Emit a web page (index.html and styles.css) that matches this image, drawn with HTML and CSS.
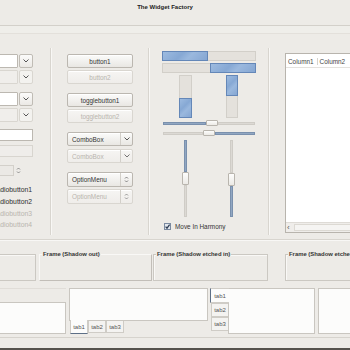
FILE: index.html
```html
<!DOCTYPE html>
<html lang="en">
<head>
    <meta charset="UTF-8">
    <meta name="viewport" content="width=device-width, initial-scale=1.0">
    <title>The Widget Factory</title>
    <link rel="stylesheet" href="styles.css">
</head>
<body>
<div class="window">
    <div class="titlebar">The Widget Factory</div>
    <div class="menubar"></div>

    <div class="main">
        <!-- entries, combos, radios -->
        <div class="col col-a">
            <div class="combo">
                <div class="entry"></div>
                <div class="drop"><svg width="6" height="4" viewBox="0 0 6 4"><path d="M0.5 0.5 L3 3 L5.5 0.5" fill="none" stroke="#555" stroke-width="1"/></svg></div>
            </div>
            <div class="combo off">
                <div class="entry"></div>
                <div class="drop"><svg width="6" height="4" viewBox="0 0 6 4"><path d="M0.5 0.5 L3 3 L5.5 0.5" fill="none" stroke="#555" stroke-width="1"/></svg></div>
            </div>
            <div class="combo pair">
                <div class="entry"></div>
                <div class="drop"><svg width="6" height="4" viewBox="0 0 6 4"><path d="M0.5 0.5 L3 3 L5.5 0.5" fill="none" stroke="#555" stroke-width="1"/></svg></div>
            </div>
            <div class="combo off">
                <div class="entry"></div>
                <div class="drop"><svg width="6" height="4" viewBox="0 0 6 4"><path d="M0.5 0.5 L3 3 L5.5 0.5" fill="none" stroke="#555" stroke-width="1"/></svg></div>
            </div>
            <div class="text-entry"></div>
            <div class="text-entry off"></div>
            <div class="spin">
                <div class="spin-field"></div>
                <div class="spin-arrows"><svg width="5" height="7" viewBox="0 0 5 7"><path d="M1 2.5 L2.5 1 L4 2.5 M1 4.5 L2.5 6 L4 4.5" fill="none" stroke="#777" stroke-width="0.8"/></svg></div>
            </div>
            <div class="radios">
                <div class="radio"><span class="dot on"></span>radiobutton1</div>
                <div class="radio"><span class="dot"></span>radiobutton2</div>
                <div class="radio off"><span class="dot"></span>radiobutton3</div>
                <div class="radio off"><span class="dot"></span>radiobutton4</div>
            </div>
        </div>

        <!-- buttons -->
        <div class="col col-b">
            <div class="btn">button1</div>
            <div class="btn off">button2</div>
            <div class="btn pair">togglebutton1</div>
            <div class="btn off">togglebutton2</div>
            <div class="btn combo-btn pair">
                <span class="lbl">ComboBox</span>
                <span class="side"><svg width="6" height="4" viewBox="0 0 6 4"><path d="M0.5 0.5 L3 3 L5.5 0.5" fill="none" stroke="#555" stroke-width="1"/></svg></span>
            </div>
            <div class="btn combo-btn off">
                <span class="lbl">ComboBox</span>
                <span class="side"><svg width="6" height="4" viewBox="0 0 6 4"><path d="M0.5 0.5 L3 3 L5.5 0.5" fill="none" stroke="#555" stroke-width="1"/></svg></span>
            </div>
            <div class="btn combo-btn option pair">
                <span class="lbl">OptionMenu</span>
                <span class="side"><svg width="5" height="7" viewBox="0 0 5 7"><path d="M1 2.5 L2.5 1 L4 2.5 M1 4.5 L2.5 6 L4 4.5" fill="none" stroke="#666" stroke-width="0.8"/></svg></span>
            </div>
            <div class="btn combo-btn option off">
                <span class="lbl">OptionMenu</span>
                <span class="side"><svg width="5" height="7" viewBox="0 0 5 7"><path d="M1 2.5 L2.5 1 L4 2.5 M1 4.5 L2.5 6 L4 4.5" fill="none" stroke="#666" stroke-width="0.8"/></svg></span>
            </div>
        </div>

        <!-- progress bars and scales -->
        <div class="col col-c">
            <div class="pbar"><div class="fill" style="width: 50%"></div></div>
            <div class="pbar rtl"><div class="fill" style="width: 50%"></div></div>
            <div class="vbars">
                <div class="vbar one"><div class="fill" style="height: 50%"></div></div>
                <div class="vbar two"><div class="fill" style="height: 52%"></div></div>
            </div>
            <div class="hscale">
                <span class="trough blue" style="width: 43px"></span>
                <span class="knob"></span>
                <span class="trough"></span>
            </div>
            <div class="hscale second">
                <span class="trough" style="width: 40px"></span>
                <span class="knob"></span>
                <span class="trough blue"></span>
            </div>
            <div class="vscales">
                <div class="vscale one">
                    <span class="trough blue" style="height: 32px"></span>
                    <span class="knob"></span>
                    <span class="trough"></span>
                </div>
                <div class="vscale two">
                    <span class="trough" style="height: 33px"></span>
                    <span class="knob"></span>
                    <span class="trough blue"></span>
                </div>
            </div>
            <div class="check">
                <svg width="7" height="7" viewBox="0 0 7 7"><rect x="0.5" y="0.5" width="6" height="6" fill="#e3e8ee" stroke="#7b8aa0"/><path d="M1.6 3.6 L3 5.2 L5.6 1.6" fill="none" stroke="#2b3a52" stroke-width="1.2"/></svg>
                <span>Move In Harmony</span>
            </div>
        </div>

        <!-- tree view -->
        <div class="col col-d">
            <div class="tree">
                <div class="tree-head">
                    <span class="colhead first">Column1</span>
                    <span class="colhead">Column2</span>
                </div>
                <div class="tree-body"></div>
                <div class="hscroll">
                    <span class="arrow">&#8249;</span>
                    <span class="track"></span>
                </div>
            </div>
        </div>
    </div>

    <div class="hsep"></div>

    <div class="frames">
        <div class="frame f1"><span class="frame-label">Frame (Shadow in)</span></div>
        <div class="frame f2 out"><span class="frame-label">Frame (Shadow out)</span></div>
        <div class="frame f3 etched"><span class="frame-label">Frame (Shadow etched in)</span></div>
        <div class="frame f4 etched"><span class="frame-label">Frame (Shadow etched out)</span></div>
    </div>

    <div class="notebooks">
        <div class="nb nb-top">
            <div class="page"></div>
        </div>
        <div class="nb nb-bottom">
            <div class="page"></div>
            <div class="tabs">
                <span class="tab active">tab1</span>
                <span class="tab">tab2</span>
                <span class="tab">tab3</span>
            </div>
        </div>
        <div class="nb nb-left">
            <div class="tabs">
                <span class="tab active">tab1</span>
                <span class="tab">tab2</span>
                <span class="tab">tab3</span>
            </div>
            <div class="page"></div>
        </div>
        <div class="nb nb-right">
            <div class="page"></div>
        </div>
    </div>

    <div class="foot"></div>
</div>
</body>
</html>
```

FILE: styles.css
```css
/* base */
* { box-sizing: border-box; }

body {
    margin: 0;
    width: 350px;
    height: 350px;
    overflow: hidden;
    background: #edebe7;
    font-family: "Liberation Sans", Arial, sans-serif;
    font-size: 6.4px;
    color: #3b3b3b;
}

.window {
    height: 350px;
    display: flex;
    flex-direction: column;
}

/* title + menubar */
.titlebar {
    height: 26px;
    padding: 4px 20px 0 0;
    border-bottom: 1px solid #d3d0ca;
    text-align: center;
    font-weight: bold;
    font-size: 6px;
    line-height: 7px;
    color: #222;
}

.menubar {
    height: 8px;
    border-bottom: 1px solid #e3e0db;
    background: #efeeea;
}

/* main columns */
.main {
    display: flex;
    height: 187px;
    margin-top: 14px;
}

.col {
    display: flex;
    flex-direction: column;
    flex-shrink: 0;
}

.col-b, .col-c, .col-d {
    border-left: 1px solid #d8d5cf;
    box-shadow: inset 1px 0 #f8f7f5;
}

.col-a {
    width: 80px;
    margin-left: -30px;
    padding: 6px 17px 0 0;
}

.col-b {
    width: 98px;
    padding: 6px 0 0 16px;
}

.col-c {
    width: 120px;
    padding: 3px 0 0 13px;
}

.col-d {
    flex: 1;
    padding: 5px 0 0 16px;
}

/* combos (left column) */
.combo {
    display: flex;
    gap: 1px;
    height: 14px;
    margin-top: 2px;
}

.combo:first-child { margin-top: 0; }
.combo.pair { margin-top: 8px; }

.combo .entry {
    flex: 1;
    background: #fff;
    border: 1px solid #bcb8b1;
    border-radius: 1px;
}

.drop {
    width: 14px;
    display: flex;
    align-items: center;
    justify-content: center;
    border: 1px solid #c0bcb5;
    border-radius: 2px;
    background: linear-gradient(#fbfbfa, #ebe9e5);
}

.combo.off .entry {
    background: #f0eeeb;
    border-color: #d9d6d0;
}

.combo.off .drop {
    border-color: #d9d6d0;
    background: #f3f2ef;
}

.text-entry {
    height: 12px;
    margin-top: 7px;
    background: #fff;
    border: 1px solid #bcb8b1;
}

.text-entry.off {
    margin-top: 4px;
    background: #efedea;
    border-color: #d8d5cf;
}

.spin {
    display: flex;
    height: 11px;
    margin: 8px 12px 0 0;
}

.spin-field {
    flex: 1;
    background: #ebe9e5;
    border: 1px solid #d3d0ca;
}

.spin-arrows {
    width: 6px;
    display: flex;
    align-items: center;
    justify-content: center;
    margin-left: 1px;
}

.radios {
    margin-top: 8px;
    display: flex;
    flex-direction: column;
}

.radio {
    height: 11.7px;
    display: flex;
    align-items: center;
    justify-content: flex-end;
    gap: 3px;
    padding-right: 1px;
    font-size: 6.8px;
    color: #2e2e2e;
}

.radio.off { color: #b9b5ae; }

.dot {
    width: 7px;
    height: 7px;
    border-radius: 50%;
    border: 1px solid #9f9a92;
    background: #fff;
}

/* buttons */
.btn {
    width: 66px;
    height: 14px;
    margin-top: 2px;
    display: flex;
    align-items: center;
    justify-content: center;
    border: 1px solid #bbb7b0;
    border-radius: 2px;
    background: linear-gradient(#fbfbfa, #e9e7e3);
    box-shadow: inset 0 1px #fff;
    color: #333;
}

.btn:first-child { margin-top: 0; }
.btn.pair { margin-top: 9px; }

.btn.off {
    border-color: #d9d6d0;
    background: linear-gradient(#f6f5f3, #efedea);
    color: #b8b4ad;
}

.combo-btn {
    justify-content: flex-start;
    padding-left: 4px;
}

.combo-btn .lbl { flex: 1; }

.combo-btn .side {
    width: 12px;
    height: 100%;
    display: flex;
    align-items: center;
    justify-content: center;
    border-left: 1px solid #d2cfc9;
}

.combo-btn.off { margin-top: 3px; }
.option { height: 15px; }
.option.off { margin-top: 2px; }
.combo-btn.off svg { opacity: 0.8; }

/* progress bars */
.pbar {
    width: 94px;
    height: 10px;
    margin-bottom: 2px;
    display: flex;
    background: #e4e1dc;
    border: 1px solid #d2cfc9;
}

.pbar.rtl { justify-content: flex-end; }

.fill {
    background: linear-gradient(135deg, #9dbbe0 0%, #86a8d4 40%, #9ab8de 60%, #85a6d2 100%);
    border: 1px solid #6487b8;
}

.pbar .fill { margin: -1px; height: 10px; }

.vbars {
    display: flex;
    height: 43px;
    padding-left: 17px;
    gap: 34px;
}

.vbar {
    width: 13px;
    display: flex;
    flex-direction: column;
    background: #e4e1dc;
    border: 1px solid #d2cfc9;
}

.vbar.one { justify-content: flex-end; }
.vbar.two { width: 12px; }
.vbar .fill { margin: -1px; }

/* scales */
.hscale {
    width: 92px;
    height: 6px;
    margin: 2px 0 0 1px;
    display: flex;
    align-items: center;
}

.hscale.second { margin-top: 4px; }

.trough {
    display: block;
    background: #dcd9d4;
    border: 1px solid #cfccc6;
}

.hscale .trough { height: 3px; }
.hscale .trough:last-child { flex: 1; }

.trough.blue {
    background: #91a7c2;
    border-color: #7a90ad;
}

.knob {
    display: block;
    flex-shrink: 0;
    background: linear-gradient(#fdfdfc, #eceae6);
    border: 1px solid #b9b5ae;
    border-radius: 1px;
}

.hscale .knob { width: 12px; height: 6px; }

.vscales {
    display: flex;
    height: 77px;
    margin-top: 4px;
    padding-left: 20px;
    gap: 39px;
}

.vscale {
    width: 7px;
    display: flex;
    flex-direction: column;
    align-items: center;
}

.vscale .trough { width: 3px; }
.vscale .trough:last-child { flex: 1; }
.vscale .knob { width: 7px; height: 13px; }

.check {
    display: flex;
    align-items: center;
    gap: 4px;
    height: 8px;
    margin: 5px 0 0 2px;
    font-size: 6.4px;
    color: #333;
}

/* tree */
.tree {
    width: 80px;
    height: 180px;
    display: flex;
    flex-direction: column;
    background: #fff;
    border: 1px solid #b8b4ad;
}

.tree-head {
    height: 14px;
    display: flex;
    align-items: center;
    padding-top: 2px;
    border-bottom: 1px solid #e4e2de;
    color: #444;
}

.colhead {
    padding: 0 3px 0 2px;
}

.colhead.first { border-right: 1px solid #d6d3ce; }

.tree-body { flex: 1; }

.hscroll {
    height: 10px;
    display: flex;
    align-items: center;
    gap: 2px;
    padding: 0 0 0 1px;
    background: #efedea;
    border-top: 1px solid #dedbd6;
}

.hscroll .arrow {
    width: 5px;
    font-size: 8px;
    line-height: 8px;
    color: #555;
}

.hscroll .track {
    flex: 1;
    height: 7px;
    background: #f5f4f2;
    border: 1px solid #dcd9d3;
}

/* separator */
.hsep {
    height: 2px;
    margin-top: 4px;
    border-top: 1px solid #d8d5cf;
    background: #f8f7f5;
}

/* frames */
.frames {
    display: flex;
    height: 27px;
    margin-top: 13px;
}

.frame {
    flex-shrink: 0;
    border: 1px solid #cbc8c2;
    box-shadow: inset 1px 1px #f9f8f6;
}

.frame-label {
    display: inline-block;
    margin: -5px 0 0 2px;
    padding: 0 1px;
    background: #edebe7;
    font-weight: bold;
    font-size: 5.9px;
    line-height: 8px;
    color: #333;
    white-space: nowrap;
    vertical-align: top;
}

.frame.out {
    border-color: #f9f8f6 #c2beb8 #c2beb8 #f9f8f6;
    box-shadow: none;
}

.f1 { width: 116px; margin-left: -80px; }
.f2 { width: 113px; margin-left: 3px; }
.f3 { width: 115px; margin-left: 1px; }
.f4 { width: 80px; margin-left: 17px; }

/* notebooks */
.notebooks {
    display: flex;
    height: 46px;
    margin-top: 7px;
}

.nb {
    flex-shrink: 0;
    display: flex;
}

.page {
    background: #fcfcfb;
    border: 1px solid #c9c6c0;
}

.nb-top {
    width: 86px;
    margin-left: -20px;
    flex-direction: column;
    border-top: 1px solid #e0ddd8;
}

.nb-top .page { margin-top: 13px; flex: 1; }

.nb-bottom {
    width: 139px;
    margin-left: 3px;
    flex-direction: column;
}

.nb-bottom .page { height: 33px; }

.tab {
    display: flex;
    align-items: center;
    justify-content: center;
    background: #f4f3f1;
    border: 1px solid #cfccc6;
    color: #555;
    font-size: 6px;
}

.nb-bottom .tabs {
    display: flex;
    padding-left: 1px;
}

.nb-bottom .tab {
    width: 18px;
    height: 12px;
    border-top: none;
}

.nb-bottom .tab.active {
    height: 14px;
    margin-top: -1px;
    background: #fcfcfb;
    border-bottom: 1px solid #5d6f86;
}

.nb-left {
    width: 105px;
    margin-left: 2px;
}

.nb-left .tabs {
    width: 18px;
    display: flex;
    flex-direction: column;
}

.nb-left .tab {
    height: 14px;
    margin-left: 1px;
    border-right: none;
}

.nb-left .tab.active {
    height: 15px;
    margin: 0 -1px 0 0;
    background: #fcfcfb;
    border-left: 1px solid #5d6f86;
    position: relative;
}

.nb-left .page { flex: 1; }

.nb-right {
    width: 40px;
    margin-left: 3px;
}

.nb-right .page { flex: 1; }

/* window bottom */
.foot {
    flex: 1;
    margin-top: 3px;
    border-top: 1px solid #d6d3cd;
    border-bottom: 2px solid #55524d;
}
```
